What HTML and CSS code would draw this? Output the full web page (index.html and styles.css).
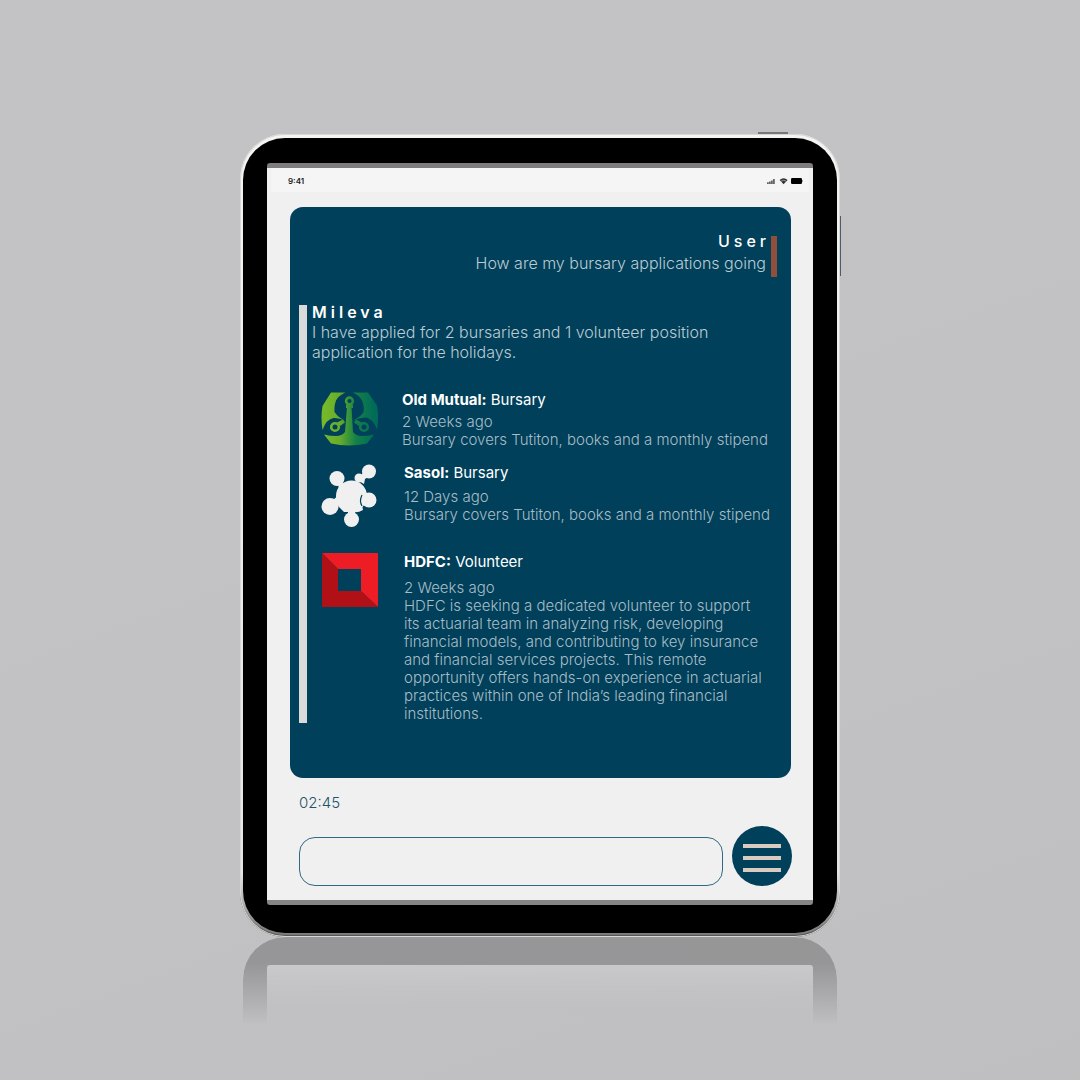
FILE: index.html
```html
<!DOCTYPE html>
<html lang="en">
<head>
<meta charset="utf-8">
<meta name="viewport" content="width=device-width, initial-scale=1">
<title>Mileva</title>
<link rel="stylesheet" href="styles.css">
</head>
<body>
<main class="stage">
  <div class="tablet">
    <span class="power-key"></span>
    <span class="volume-key"></span>
    <div class="bezel">
      <div class="screen">
        <header class="status">
          <span class="clock">9:41</span>
          <svg class="status-icons" width="36" height="8" viewBox="0 0 36 8" aria-hidden="true">
            <path d="M0 5.2h1.800V7H0zM2 4.400h1.800V7H2zM4 3.400h1.800V7H4zM6 2h1.800v5H6z" fill="#666"/>
            <path d="M12.600 3q4-3.600 8 0l-4 4.200z" fill="#333"/>
            <path d="M14 4.200q2.600-1.800 5.200 0" fill="none" stroke="#ddd" stroke-width=".6"/>
            <rect x="24" y="1" width="11" height="6" rx="1.300" fill="#000"/>
            <path d="M35.500 3v2" stroke="#888" stroke-width=".8"/>
          </svg>
        </header>
        <section class="chat">
          <article class="message message-user">
            <div>
              <h2 class="sender">User</h2>
              <p class="text">How are my bursary applications going</p>
            </div>
          </article>
          <article class="message message-bot">
            <h2 class="sender">Mileva</h2>
            <p class="text">I have applied for 2 bursaries and 1 volunteer position application for the holidays.</p>
            <ul class="applications">
              <li class="application">
                <svg class="logo" width="57" height="56" viewBox="0 0 57 56" aria-hidden="true">
                  <defs><linearGradient id="om" gradientUnits="userSpaceOnUse" x1="4" y1="0" x2="54" y2="0"><stop offset="0" stop-color="#76b82a"/><stop offset=".3" stop-color="#66ac2a"/><stop offset=".62" stop-color="#148048"/><stop offset="1" stop-color="#006b58"/></linearGradient></defs>
                  <g fill="url(#om)">
                    <path d="M10 1.500h14.500q-7 3-9.500 8-2 5-1.500 11.500 4 6 11 8.500-7-3-12-2.500-7 1-11 12-2-13 0-24z"/>
                    <path d="M32 1.500h15l9 13q2 12 0 24-4-11-11-12-6 0-13 3 7-3 10.500-8.500 1-7-1.500-11.500-2.500-5-9-8z"/>
                    <path d="M26 16h4.500l1.500 25q3 4 9 4 6 0 12-1.500l-7 9q-9 2-18 2t-18-2l-7-9q6 1.500 12 1.500 6 0 9-4z"/>
                    <path d="M25 13.500h7v3.500h-7zM16 31.500l4-2 2-1 2 3-5 3.500zM41 31.500l-4-2-2-1-2 3 5 3.500z"/>
                  </g>
                  <g fill="none" stroke="url(#om)" stroke-width="2.600"><circle cx="28.500" cy="10" r="3.400"/><circle cx="14" cy="36" r="3.800"/><circle cx="43" cy="36" r="3.800"/></g>
                </svg>
                <div class="details">
                  <h3 class="title"><strong>Old Mutual:</strong> Bursary</h3>
                  <p class="summary">2 Weeks ago<br>Bursary covers Tutiton, books and a monthly stipend</p>
                </div>
              </li>
              <li class="application application-roomy">
                <svg class="logo" width="57" height="64" viewBox="0 0 57 64" aria-hidden="true">
                  <g fill="#f0f0f0">
                    <circle cx="30.500" cy="32" r="15.500"/><path d="M35 35h9l-3 6 1 5q-5 3-10 2z"/><path d="M18 36h12v12h-7l-5-5z"/>
                    <circle cx="16" cy="14.500" r="7.500"/><circle cx="9" cy="42.500" r="8.500"/><circle cx="30.500" cy="55.500" r="7.500"/><circle cx="48" cy="36" r="7.500"/><circle cx="48" cy="7.500" r="7"/><circle cx="38" cy="14" r="4.500"/>
                    <path d="M17 19l4-2 2 6-5 3zM12 36l7-6 1 8-3 5zM27 46h7v4h-7zM41 32l4-2v8h-5zM40 11l3-3 4 5-3 2-1 5-7-4z"/>
                  </g>
                  <path d="M41 31q-3 6 0 11" fill="none" stroke="#00405a" stroke-width="1.200"/>
                </svg>
                <div class="details">
                  <h3 class="title"><strong>Sasol:</strong> Bursary</h3>
                  <p class="summary">12 Days ago<br>Bursary covers Tutiton, books and a monthly stipend</p>
                </div>
              </li>
              <li class="application application-roomy">
                <svg class="logo" width="57" height="54" viewBox="0 0 57 54" aria-hidden="true">
                  <path d="M1 0h56v54L40 38V16H17z" fill="#ee1c25"/>
                  <path d="M1 0v54h56L40 38H17V16z" fill="#b11116"/>
                </svg>
                <div class="details">
                  <h3 class="title"><strong>HDFC:</strong> Volunteer</h3>
                  <p class="summary">2 Weeks ago<br>HDFC is seeking a dedicated volunteer to support its actuarial team in analyzing risk, developing financial models, and contributing to key insurance and financial services projects. This remote opportunity offers hands-on experience in actuarial practices within one of India’s leading financial institutions.</p>
                </div>
              </li>
            </ul>
          </article>
        </section>
        <footer class="composer">
          <time class="time">02:45</time>
          <form class="compose-row">
            <input class="entry" type="text" aria-label="Message">
            <button class="menu" type="button" aria-label="Menu">
              <svg width="38" height="28" viewBox="0 0 38 28" aria-hidden="true"><path d="M0 2h38M0 14h38M0 26h38" stroke="#d8ccc1" stroke-width="4"/></svg>
            </button>
          </form>
        </footer>
      </div>
    </div>
  </div>
  <div class="reflection"><div class="reflection-screen"></div></div>
</main>
</body>
</html>
```
FILE: styles.css
```css
* { box-sizing: border-box; }

body {
  margin: 0;
  min-height: 100vh;
  background: linear-gradient(160deg, #c3c3c5, #c2c2c4 60%, #bfbfc1);
  color: #fff;
  font-family: Inter, "Liberation Sans", sans-serif;
}

h2, h3, p, ul { margin: 0; padding: 0; }

.stage {
  display: flex;
  flex-direction: column;
  align-items: center;
  padding-top: 134px;
}

.tablet {
  position: relative;
  width: 100%;
  max-width: 600px;
  padding: 4px 3px;
  border-radius: 45px;
  background: linear-gradient(#f4f4f2, #e2e4e6 92%, #777 100%);
  box-shadow: inset 0 0 0 1px #d8d8d4, inset 0 -2px 1px #555;
}

.power-key {
  position: absolute;
  top: -2px;
  right: 52px;
  width: 30px;
  height: 2px;
  background: #777;
}

.volume-key {
  position: absolute;
  top: 82px;
  right: -1px;
  width: 1px;
  height: 60px;
  background: #4d5b68;
}

.bezel {
  padding: 25px 24px 28px;
  border-radius: 42px;
  background: #000;
}

.screen {
  padding-bottom: 14px;
  border-top: 5px solid #807c7e;
  border-bottom: 5px solid #858585;
  border-radius: 3px;
  background: #f0f0f0;
}

.status {
  display: flex;
  justify-content: space-between;
  align-items: center;
  height: 24px;
  margin: 0 4px;
  padding: 2px 6px 0 17px;
  background: #f5f5f5;
}

.clock {
  color: #222;
  font-size: 8px;
  font-weight: 600;
}

.chat {
  margin: 15px 22px 0 23px;
  padding: 24px 0 55px 9px;
  border-radius: 13px;
  background: #00405a;
}

.message-user {
  display: flex;
  justify-content: flex-end;
  align-items: flex-end;
  gap: 5px;
  margin-right: 14px;
  text-align: right;
}

.message-user::after {
  content: "";
  width: 6px;
  height: 41px;
  margin-bottom: -4px;
  background: #8f4f3b;
}

.message-bot {
  display: flow-root;
  margin-top: 32px;
  padding-left: 5px;
  border-left: 8px solid #dadada;
}

.sender {
  font-size: 16px;
  font-weight: 600;
  line-height: 20px;
  letter-spacing: 4px;
}

.message-user .sender {
  margin: 0 -4px 2px 0;
  font-weight: 500;
}

.message-bot .sender { margin-top: -3px; }

.text {
  color: #bccbd3;
  font-size: 16px;
  font-weight: 300;
  line-height: 20px;
}

.message-bot .text { max-width: 420px; }

.applications {
  display: flex;
  flex-direction: column;
  gap: 15px;
  margin-top: 29px;
  list-style: none;
}

.application {
  display: flex;
  align-items: flex-start;
  gap: 24px;
  padding-left: 9px;
}

.application-roomy { gap: 26px; }

.application:last-child { margin-top: 10px; }

.logo { flex: none; }

.details { flex: 1; }

.title {
  font-size: 15px;
  font-weight: 400;
  line-height: 18px;
}

.title strong { font-weight: 700; }

.summary {
  margin-top: 4px;
  color: #a8bcc6;
  font-size: 15px;
  font-weight: 300;
  line-height: 18px;
}

.application-roomy .summary { margin-top: 6px; }

.application:last-child .summary {
  max-width: 364px;
  margin-top: 8px;
}

.composer {
  padding: 15px 21px 0 32px;
}

.time {
  display: block;
  color: #1f546c;
  font-size: 15px;
  font-weight: 300;
  line-height: 20px;
}

.compose-row {
  display: flex;
  align-items: flex-end;
  gap: 9px;
  margin-top: 13px;
}

.entry {
  flex: 1;
  min-width: 0;
  height: 49px;
  padding: 0 16px;
  border: 1px solid #2f6983;
  border-radius: 16px;
  background: #f0f0f0;
  color: #00405a;
  font: 300 16px Inter, "Liberation Sans", sans-serif;
}

.menu {
  display: grid;
  place-items: center;
  width: 60px;
  height: 60px;
  padding: 3px 0 0;
  border: 0;
  border-radius: 50%;
  background: #00405a;
}

.reflection {
  width: 100%;
  max-width: 594px;
  padding: 28px 24px 0;
  border-radius: 42px 42px 0 0;
  overflow: hidden;
  -webkit-mask-image: linear-gradient(#000, #000 30%, transparent);
  mask-image: linear-gradient(#000, #000 30%, transparent);
}

.reflection-screen {
  height: 60px;
  border-radius: 3px 3px 0 0;
  background: linear-gradient(#ffffff26, #ffffff00);
  box-shadow: 0 0 0 60px #00000038;
}
```
